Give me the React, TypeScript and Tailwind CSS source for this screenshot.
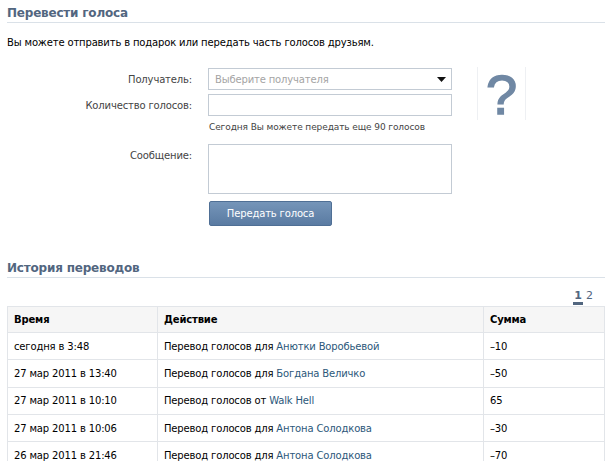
const rows = [
  { time: "сегодня в 3:48", action: "Перевод голосов для", who: "Анютки Воробьевой", sum: "–10" },
  { time: "27 мар 2011 в 13:40", action: "Перевод голосов для", who: "Богдана Величко", sum: "–50" },
  { time: "27 мар 2011 в 10:10", action: "Перевод голосов от", who: "Walk Hell", sum: "65" },
  { time: "27 мар 2011 в 10:06", action: "Перевод голосов для", who: "Антона Солодкова", sum: "–30" },
  { time: "26 мар 2011 в 21:46", action: "Перевод голосов для", who: "Антона Солодкова", sum: "–70" },
];

const font = { fontFamily: "'DejaVu Sans', Verdana, sans-serif" };

const SectionTitle = ({ children }: { children: string }) => (
  <div className="border-b border-[#dae1e8] pb-[1px] text-[12px] font-bold leading-[16px] tracking-[-0.2px] text-[#52667f]">
    {children}
  </div>
);

export default function App() {
  return (
    <div className="h-[461px] w-[612px] overflow-hidden bg-white px-[7px] pt-[5px] text-[10px] text-black" style={font}>
      <SectionTitle>Перевести голоса</SectionTitle>
      <p className="mt-[13px] leading-[13px] tracking-[-0.15px]">
        Вы можете отправить в подарок или передать часть голосов друзьям.
      </p>

      <div className="mt-[19px] flex">
        <div className="flex flex-col">
          <div className="flex items-center">
            <label className="w-[186px] pr-[1px] text-right text-[#444] tracking-[-0.15px]">Получатель:</label>
            <div className="ml-[15px] flex h-[22px] w-[244px] items-center justify-between border border-[#c3cbd4] pl-[6px] pr-[5px]">
              <span className="text-[#a4a4a4] tracking-[-0.15px]">Выберите получателя</span>
              <svg width="9" height="5" viewBox="0 0 9 5">
                <path d="M0 0h9L4.5 5z" fill="#111" />
              </svg>
            </div>
          </div>
          <div className="mt-[4px] flex items-center">
            <label className="w-[186px] pr-[1px] text-right text-[#444] tracking-[-0.15px]">Количество голосов:</label>
            <div className="ml-[15px] h-[22px] w-[244px] border border-[#c3cbd4]" />
          </div>
          <div className="ml-[202px] mt-[5px] text-[9px] leading-[12px] text-[#444] tracking-[-0.1px]">
            Сегодня Вы можете передать еще 90 голосов
          </div>
          <div className="mt-[11px] flex items-start">
            <label className="mt-[4px] w-[186px] pr-[1px] text-right text-[#444] tracking-[-0.15px]">Сообщение:</label>
            <div className="ml-[15px] h-[50px] w-[244px] border border-[#c3cbd4]" />
          </div>
          <button className="ml-[202px] mt-[7px] h-[25px] w-[123px] rounded-[2px] border border-[#4f6f95] bg-gradient-to-b from-[#7595b9] to-[#5a7ba2] text-[10px] text-white tracking-[-0.15px]">
            Передать голоса
          </button>
        </div>
        <div className="ml-[25px] mt-[-1px] flex h-[53px] w-[49px] items-center justify-center border-x border-[#eef0f3] pt-[3px]">
          <span
            className="text-[56px] leading-none text-[#7088a4] [-webkit-text-stroke:1.5px_#7088a4]"
            style={{ fontFamily: "'Liberation Sans', Arial, sans-serif" }}
          >
            ?
          </span>
        </div>
      </div>

      <div className="mt-[34px]">
        <SectionTitle>История переводов</SectionTitle>
      </div>

      <div className="mt-[12px] flex justify-end pr-[12px] text-[11px] leading-[12px]">
        <span className="border-b-[3px] border-[#52667f] px-[1px] font-bold text-[#52667f]">1</span>
        <span className="ml-[3px] text-[#52667f]">2</span>
      </div>

      <table className="mt-[1px] w-full border-collapse">
        <colgroup>
          <col className="w-[150px]" />
          <col className="w-[326px]" />
          <col />
        </colgroup>
        <thead>
          <tr className="h-[26px] bg-[#f6f6f6]">
            {["Время", "Действие", "Сумма"].map((h) => (
              <th key={h} className="border border-[#e2e5e9] px-[6px] text-left font-bold tracking-[-0.15px]">
                {h}
              </th>
            ))}
          </tr>
        </thead>
        <tbody>
          {rows.map((r, i) => (
            <tr key={i} className="h-[27.3px]">
              <td className="border border-[#e2e5e9] px-[6px] tracking-[-0.15px]">{r.time}</td>
              <td className="border border-[#e2e5e9] px-[6px] tracking-[-0.15px]">
                {r.action} <a className="text-[#2b587a]">{r.who}</a>
              </td>
              <td className="border border-[#e2e5e9] px-[6px] tracking-[-0.15px]">{r.sum}</td>
            </tr>
          ))}
        </tbody>
      </table>
    </div>
  );
}
